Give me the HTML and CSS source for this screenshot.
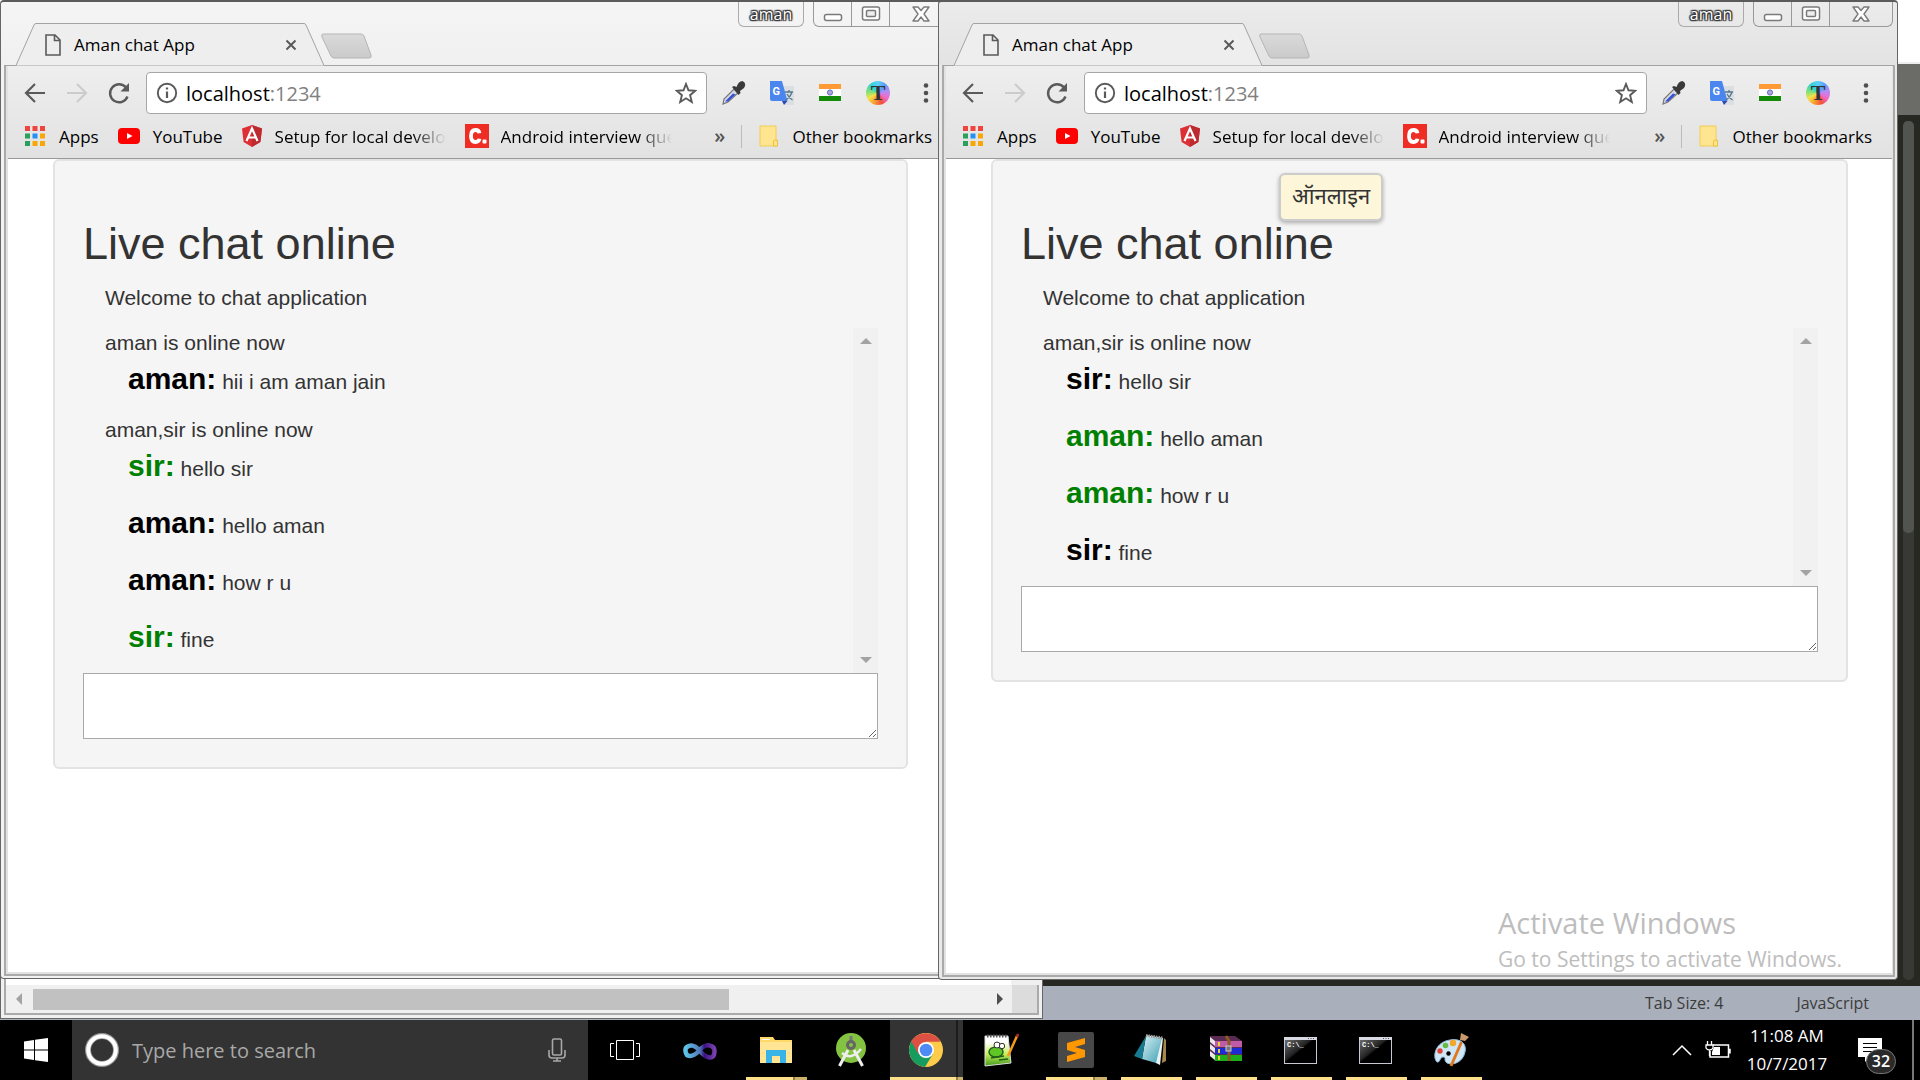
FILE: index.html
```html
<!DOCTYPE html>
<html lang="en">
<head>
<meta charset="utf-8">
<meta name="viewport" content="width=device-width, initial-scale=1">
<title>Aman chat App</title>
<link rel="stylesheet" href="styles.css">
</head>
<body>
<svg class="sprite" aria-hidden="true">
  <defs>
    <linearGradient id="g-newtab" x1="0" y1="0" x2="0" y2="1"><stop offset="0" stop-color="#dadada"/><stop offset="1" stop-color="#cacaca"/></linearGradient>
    <linearGradient id="g-vs" x1="0" x2="1"><stop offset="0" stop-color="#5fc3e8"/><stop offset=".5" stop-color="#4f78b8"/><stop offset=".65" stop-color="#3b1280"/><stop offset="1" stop-color="#7a3fb0"/></linearGradient>
    <linearGradient id="g-pad" x1="0" y1="0" x2="1" y2="1"><stop offset="0" stop-color="#d9f1f5"/><stop offset="1" stop-color="#3f9fb3"/></linearGradient>
    <linearGradient id="g-cmd" x1="0" y1="0" x2="1" y2="1"><stop offset="0" stop-color="#777"/><stop offset=".45" stop-color="#222"/><stop offset=".5" stop-color="#000"/></linearGradient>
    <linearGradient id="g-npp" x1="0" y1="0" x2="0" y2="1"><stop offset=".2" stop-color="#fff"/><stop offset=".6" stop-color="#c8ee5a"/><stop offset="1" stop-color="#3f9b1c"/></linearGradient>
  </defs>
  <symbol id="i-tab" viewBox="0 0 312 43"><path d="M0 42.500H3L21 2Q21.500.5 23 .5H291Q292.500.5 293 2L311 42.500" fill="#eee" stroke="#a3a3a3"/></symbol>
  <symbol id="i-newtab" viewBox="0 0 51 26"><path d="M2 1H40Q42 1 43 3L50 22Q51 25 48 25H13Q11 25 10 23L1 4Q0 1 2 1Z" fill="url(#g-newtab)" stroke="#b5b5b5"/></symbol>
  <symbol id="i-doc" viewBox="0 0 16 22"><path d="M1 1H10L15 6V21H1ZM9.500 1V6.500H15" fill="none" stroke="#5a5a5a" stroke-width="1.600"/></symbol>
  <symbol id="i-x" viewBox="0 0 12 12"><path d="M1.500 1.500L10.500 10.500M10.500 1.500L1.500 10.500" stroke="#5a5a5a" stroke-width="2"/></symbol>
  <symbol id="i-back" viewBox="0 0 24 24"><path d="M12 3L3 12L12 21M3 12H22" fill="none" stroke="currentColor" stroke-width="2.200"/></symbol>
  <symbol id="i-fwd" viewBox="0 0 24 24"><path d="M12 3L21 12L12 21M21 12H2" fill="none" stroke="currentColor" stroke-width="2.200"/></symbol>
  <symbol id="i-reload" viewBox="0 0 24 24"><path d="M20.500 15.500A9 9 0 1 1 19 6.500" fill="none" stroke="#5a5a5a" stroke-width="2.400"/><path d="M22 2V10.500H13.500Z" fill="#5a5a5a"/></symbol>
  <symbol id="i-info" viewBox="0 0 22 22"><circle cx="11" cy="11" r="9.200" fill="none" stroke="#5a5a5a" stroke-width="1.900"/><path d="M11 5.500V7.500M11 9.500V16" stroke="#5a5a5a" stroke-width="2.200"/></symbol>
  <symbol id="i-star" viewBox="0 0 22 22"><path d="M11 2L13.500 8.300L20.300 8.800L15.100 13.200L16.800 20L11 16.300L5.200 20L6.900 13.200L1.700 8.800L8.500 8.300Z" fill="none" stroke="#5a5a5a" stroke-width="1.900"/></symbol>
  <symbol id="i-drop" viewBox="0 0 24 24"><path d="M1 23L2 18L12 8L16 12L6 21Z" fill="#d5d8e4" stroke="#777" stroke-width="1.200"/><path d="M3 20.500L11 12.500L13.500 13.500L6 20.500Z" fill="#3450d8"/><path d="M10 6L12 5L14.500 6Q16.500 0 20.500 0Q25 2 22 7L18 10L18.500 12L16.500 14Z" fill="#3a3a3a"/></symbol>
  <symbol id="i-gt" viewBox="0 0 24 24"><path d="M10 5H24V24H15Z" fill="#dcdfe2"/><path d="M0 0H12L17.500 20H2Q0 20 0 18Z" fill="#4a86ee"/><path d="M12 20H17.500L14 24Z" fill="#2b48b0"/><text x="2.500" y="14" font-family="Roboto" font-weight="700" font-size="11" fill="#fff">G</text><path d="M15 11H23M19 9V11M22 11Q20 17 15.500 19M17 13Q19 17 22.500 19" fill="none" stroke="#56788c" stroke-width="1.300"/></symbol>
  <symbol id="i-flag" viewBox="0 0 24 24"><rect x="1" y="3" width="22" height="5" fill="#ff9a35"/><rect x="1" y="8" width="22" height="8" fill="#fff"/><rect x="1" y="15" width="22" height="5" fill="#138a08"/><circle cx="12" cy="11.500" r="2.600" fill="#a8a8dc" stroke="#6a6abf"/></symbol>
  <symbol id="i-dots" viewBox="0 0 6 24"><circle cx="3" cy="4.500" r="2.300" fill="#4f4f4f"/><circle cx="3" cy="12" r="2.300" fill="#4f4f4f"/><circle cx="3" cy="19.500" r="2.300" fill="#4f4f4f"/></symbol>
  <symbol id="i-apps" viewBox="0 0 20 20"><path d="M0 0H5V5H0ZM7.500 0H12.500V5H7.500ZM15 0H20V5H15Z" fill="#f0443e"/><path d="M0 7.500H5V12.500H0ZM0 15H5V20H0Z" fill="#2ba05a"/><path d="M7.500 7.500H12.500V12.500H7.500Z" fill="#2490f4"/><path d="M15 7.500H20V12.500H15ZM7.500 15H12.500V20H7.500ZM15 15H20V20H15Z" fill="#f7a808"/></symbol>
  <symbol id="i-yt" viewBox="0 0 22 16"><rect width="22" height="16" rx="4" fill="#f00"/><path d="M9 5L14.500 8L9 11Z" fill="#fff"/></symbol>
  <symbol id="i-ng" viewBox="0 0 20 22"><path d="M10 0L20 3.500L18.400 17L10 22L1.600 17L0 3.500Z" fill="#dd3035"/><path d="M10 0L20 3.500L18.400 17L10 22Z" fill="#bd2a30"/><path d="M4.500 16L10 3.500L15.500 16M6.500 12.500H13.500" fill="none" stroke="#fff" stroke-width="2.200"/></symbol>
  <symbol id="i-c" viewBox="0 0 24 24"><rect width="24" height="24" fill="#ee2e24"/><path d="M14.500 9.200Q14 6 10.500 6Q6 6 6 12Q6 18 10.500 18Q14 18 14.500 14.800" fill="none" stroke="#fff" stroke-width="3.800"/><rect x="17.500" y="15.500" width="4" height="4" rx="1" fill="#fff"/></symbol>
  <symbol id="i-folder" viewBox="0 0 20 22"><path d="M1 1H17V15H18.500V21H1Z" fill="#ffe58f" stroke="#f4cc55"/><path d="M14.500 21V17Q14.500 15 16 15Q18.500 15 18.500 17V21Z" fill="#ffe58f" stroke="#edc13a"/></symbol>
  <symbol id="i-min" viewBox="0 0 20 18"><rect x="1.500" y="9.500" width="17" height="6" rx="2" fill="#fff" stroke="#7a7a7a" stroke-width="1.500"/></symbol>
  <symbol id="i-max" viewBox="0 0 20 18"><rect x="1.500" y="2" width="17" height="13" rx="2" fill="#fff" stroke="#7a7a7a" stroke-width="1.500"/><rect x="5.500" y="5.500" width="9" height="6" rx="1" fill="#eee" stroke="#7a7a7a" stroke-width="1.500"/></symbol>
  <symbol id="i-close" viewBox="0 0 20 18"><path d="M2 2H7L10 5.500L13 2H18L13 9L18 16H13L10 12L7 16H2L7 9Z" fill="#fff" stroke="#7a7a7a" stroke-width="1.400" stroke-linejoin="round"/></symbol>
</svg>

<div class="desktop">
  <main class="workspace">
    <div class="editor" aria-hidden="true">
      <div class="editor-title"></div>
      <div class="editor-tabs"></div>
      <div class="editor-code"><div class="editor-track"><div class="editor-thumb"></div></div></div>
      <div class="editor-status"><span>Tab Size: 4</span><span>JavaScript</span></div>
    </div>

    <div class="back-window" aria-hidden="true">
      <div class="back-page"></div>
      <div class="hscroll">
        <i class="arrow-left"></i><div class="htrack"><div class="hthumb"></div></div><i class="arrow-right"></i><div class="hcorner"></div>
      </div>
    </div>

    <section class="window window-left" aria-label="Aman chat App, aman">
      <header class="titlebar">
        <div class="tab"><svg class="tab-shape"><use href="#i-tab"/></svg><svg class="doc"><use href="#i-doc"/></svg><span class="tab-name">Aman chat App</span><button class="tab-close" aria-label="Close tab"><svg><use href="#i-x"/></svg></button></div>
        <button class="newtab" aria-label="New tab"><svg><use href="#i-newtab"/></svg></button>
        <div class="controls">
          <button class="profile">aman</button>
          <div class="control-group"><button aria-label="Minimize"><svg><use href="#i-min"/></svg></button><button aria-label="Maximize"><svg><use href="#i-max"/></svg></button><button class="close" aria-label="Close"><svg><use href="#i-close"/></svg></button></div>
        </div>
      </header>
      <div class="client">
        <div class="chrome">
          <div class="toolbar">
            <button class="tool" aria-label="Back"><svg><use href="#i-back"/></svg></button>
            <button class="tool off" aria-label="Forward"><svg><use href="#i-fwd"/></svg></button>
            <button class="tool" aria-label="Reload"><svg><use href="#i-reload"/></svg></button>
            <div class="omnibox"><svg><use href="#i-info"/></svg><span class="url">localhost<span class="port">:1234</span></span><svg><use href="#i-star"/></svg></div>
            <div class="extensions">
              <button class="tool" aria-label="Colour picker"><svg><use href="#i-drop"/></svg></button>
              <button class="tool" aria-label="Translate"><svg><use href="#i-gt"/></svg></button>
              <button class="tool" aria-label="Hindi"><svg><use href="#i-flag"/></svg></button>
              <button class="tool wheel" aria-label="Themes">T</button>
              <button class="tool" aria-label="Menu"><svg><use href="#i-dots"/></svg></button>
            </div>
          </div>
          <nav class="bookmarks">
            <a href="#" class="bm-apps"><svg class="s20"><use href="#i-apps"/></svg>Apps</a>
            <a href="#" class="bm-yt"><svg class="yt"><use href="#i-yt"/></svg>YouTube</a>
            <a href="#" class="bm-ng"><svg class="s22"><use href="#i-ng"/></svg><span class="fade">Setup for local develo</span></a>
            <a href="#" class="bm-c"><svg class="s24"><use href="#i-c"/></svg><span class="fade">Android interview que</span></a>
            <button class="more" aria-label="More bookmarks">»</button>
            <a href="#" class="other"><svg class="s22"><use href="#i-folder"/></svg>Other bookmarks</a>
          </nav>
        </div>
        <div class="page">
          <div class="well">
            <h1>Live chat online</h1>
            <p class="welcome">Welcome to chat application</p>
            <div class="log">
              <div class="messages">
                <p class="status">aman is online now</p>
                <p class="msg"><b>aman:</b> hii i am aman jain</p>
                <p class="status">aman,sir is online now</p>
                <p class="msg them"><b>sir:</b> hello sir</p>
                <p class="msg"><b>aman:</b> hello aman</p>
                <p class="msg"><b>aman:</b> how r u</p>
                <p class="msg them"><b>sir:</b> fine</p>
              </div>
              <div class="vscroll" aria-hidden="true"><i class="arrow-up"></i><i class="arrow-down"></i></div>
            </div>
            <textarea aria-label="Message"></textarea>
          </div>
        </div>
      </div>
    </section>

    <section class="window window-right" aria-label="Aman chat App, sir">
      <header class="titlebar">
        <div class="tab"><svg class="tab-shape"><use href="#i-tab"/></svg><svg class="doc"><use href="#i-doc"/></svg><span class="tab-name">Aman chat App</span><button class="tab-close" aria-label="Close tab"><svg><use href="#i-x"/></svg></button></div>
        <button class="newtab" aria-label="New tab"><svg><use href="#i-newtab"/></svg></button>
        <div class="controls">
          <button class="profile">aman</button>
          <div class="control-group"><button aria-label="Minimize"><svg><use href="#i-min"/></svg></button><button aria-label="Maximize"><svg><use href="#i-max"/></svg></button><button class="close" aria-label="Close"><svg><use href="#i-close"/></svg></button></div>
        </div>
      </header>
      <div class="client">
        <div class="chrome">
          <div class="toolbar">
            <button class="tool" aria-label="Back"><svg><use href="#i-back"/></svg></button>
            <button class="tool off" aria-label="Forward"><svg><use href="#i-fwd"/></svg></button>
            <button class="tool" aria-label="Reload"><svg><use href="#i-reload"/></svg></button>
            <div class="omnibox"><svg><use href="#i-info"/></svg><span class="url">localhost<span class="port">:1234</span></span><svg><use href="#i-star"/></svg></div>
            <div class="extensions">
              <button class="tool" aria-label="Colour picker"><svg><use href="#i-drop"/></svg></button>
              <button class="tool" aria-label="Translate"><svg><use href="#i-gt"/></svg></button>
              <button class="tool" aria-label="Hindi"><svg><use href="#i-flag"/></svg></button>
              <button class="tool wheel" aria-label="Themes">T</button>
              <button class="tool" aria-label="Menu"><svg><use href="#i-dots"/></svg></button>
            </div>
          </div>
          <nav class="bookmarks">
            <a href="#" class="bm-apps"><svg class="s20"><use href="#i-apps"/></svg>Apps</a>
            <a href="#" class="bm-yt"><svg class="yt"><use href="#i-yt"/></svg>YouTube</a>
            <a href="#" class="bm-ng"><svg class="s22"><use href="#i-ng"/></svg><span class="fade">Setup for local develo</span></a>
            <a href="#" class="bm-c"><svg class="s24"><use href="#i-c"/></svg><span class="fade">Android interview que</span></a>
            <button class="more" aria-label="More bookmarks">»</button>
            <a href="#" class="other"><svg class="s22"><use href="#i-folder"/></svg>Other bookmarks</a>
          </nav>
        </div>
        <div class="page">
          <div class="well">
            <h1>Live chat online</h1>
            <p class="welcome">Welcome to chat application</p>
            <div class="log">
              <div class="messages">
                <p class="status">aman,sir is online now</p>
                <p class="msg"><b>sir:</b> hello sir</p>
                <p class="msg them"><b>aman:</b> hello aman</p>
                <p class="msg them"><b>aman:</b> how r u</p>
                <p class="msg"><b>sir:</b> fine</p>
              </div>
              <div class="vscroll" aria-hidden="true"><i class="arrow-up"></i><i class="arrow-down"></i></div>
            </div>
            <textarea aria-label="Message"></textarea>
          </div>
          <div class="tooltip" role="tooltip" lang="hi">ऑनलाइन</div>
        </div>
      </div>
    </section>

    <div class="watermark"><div class="wm-title">Activate Windows</div><div class="wm-text">Go to Settings to activate Windows.</div></div>
  </main>

  <footer class="taskbar">
    <button class="start" aria-label="Start"><svg viewBox="0 0 24 24"><path d="M0 3.500L10 2V11.500H0ZM11 1.800L24 0V11.500H11ZM0 12.500H10V22L0 20.500ZM11 12.500H24V24L11 22.200Z" fill="#fff"/></svg></button>
    <div class="search">
      <svg class="ring" viewBox="0 0 34 34"><circle cx="17" cy="17" r="14" fill="none" stroke="#999" stroke-width="6"/><circle cx="17" cy="17" r="13.800" fill="none" stroke="#fff" stroke-width="4"/></svg>
      <input type="text" placeholder="Type here to search" aria-label="Search">
      <svg class="mic" viewBox="0 0 18 24"><rect x="4.500" y="1" width="9" height="16" rx="1.500" fill="none" stroke="#a8a8a8" stroke-width="1.600"/><path d="M1 12V17Q1 20 4 20H14Q17 20 17 17V12M9 20V23M5 23H13" fill="none" stroke="#a8a8a8" stroke-width="1.600"/></svg>
    </div>
    <div class="apps">
      <button class="app" aria-label="Task view"><svg viewBox="0 0 36 36"><path d="M8.500 8.500H25.500V27.500H8.500ZM6 11.500H2.500V24.500H6M28 11.500H31.500V24.500H28" fill="none" stroke="#fff"/></svg></button>
      <button class="app" aria-label="Visual Studio"><svg viewBox="0 0 36 36"><path d="M17 19Q11 12 6 14Q2 15 2.500 19Q3 24 7 24Q11 24 16 19Q21 12.500 26.500 13.500Q31.500 14.500 31.500 19Q31.500 26 26.500 25.500Q22 25 17 19Z" fill="none" stroke="url(#g-vs)" stroke-width="4.500"/></svg></button>
      <button class="app open stack" aria-label="File Explorer"><svg viewBox="0 0 36 36"><path d="M2 5H15L17 8H34V31H2Z" fill="#ffd868"/><path d="M2 10H34V31H2Z" fill="#ffe594"/><path d="M4 7.500H12" stroke="#fff"/><path d="M8 31V18H28V31H22V24H14V31Z" fill="#39b4e9"/></svg></button>
      <button class="app" aria-label="Android Studio"><svg viewBox="0 0 36 36"><circle cx="18" cy="16" r="15" fill="#84c341"/><path d="M18 10L18 4" stroke="#777" stroke-width="3"/><path d="M15 18L6.500 34M21 18L29.500 34" stroke="#eee" stroke-width="3"/><path d="M9 21Q18 29 28 17" fill="none" stroke="#eee" stroke-width="2.500"/><circle cx="18" cy="13" r="3.500" fill="#84c341" stroke="#666" stroke-width="3"/></svg></button>
      <button class="app open stack active" aria-label="Google Chrome"><svg viewBox="0 0 36 36"><circle cx="18" cy="18" r="17" fill="#ffcb4a"/><path d="M18 18L3.300 9.500A17 17 0 0 0 17 35L25 22Z" fill="#179c5f"/><path d="M3.300 9.500A17 17 0 0 1 32.700 9.800H18L10.500 22Z" fill="#dd5144"/><circle cx="18" cy="18" r="8" fill="#fff"/><circle cx="18" cy="18" r="6.300" fill="#4c8bf5"/></svg></button>
      <button class="app" aria-label="Notepad++"><svg viewBox="0 0 36 36"><path d="M2 4H25L28 31L2 34Z" fill="url(#g-npp)" stroke="#ddd"/><path d="M4 4H25" stroke="#555" stroke-width="3" stroke-dasharray="1.500 1.500"/><ellipse cx="13" cy="20" rx="7" ry="5" fill="#5fc626" stroke="#23611a" stroke-width="1.500"/><circle cx="14" cy="13" r="3" fill="#fff" stroke="#333"/><circle cx="19" cy="14" r="2.700" fill="#fff" stroke="#333"/><path d="M8 26L21 24M16 28L25 27" stroke="#215e18" stroke-width="1.500"/><path d="M25 24L34 4" stroke="#f39a1c" stroke-width="2.500"/><path d="M34 5L35 2" stroke="#b3292c" stroke-width="2.500"/></svg></button>
      <button class="app open stack" aria-label="Sublime Text"><svg viewBox="0 0 36 36"><rect width="36" height="36" rx="2" fill="#484848"/><path d="M9 11L27 6V12L17 15L27 18V25L9 30V24L19 21L9 18Z" fill="#ff9800"/></svg></button>
      <button class="app open" aria-label="Notepad"><svg viewBox="0 0 36 36"><path d="M31 6L33 8V29L29 31Z" fill="#a88848"/><path d="M13 3L30 6L27 33L23 31Z" fill="#e9f3f4"/><path d="M13 4L29 6L23 31L9 27Z" fill="url(#g-pad)"/><path d="M13 4L9 27L1 24Z" fill="#187b91"/><path d="M13 3.500L30 6" stroke="#999" stroke-width="3" stroke-dasharray="1.500 1"/></svg></button>
      <button class="app open" aria-label="WinRAR"><svg viewBox="0 0 36 36"><path d="M2 4H27L34 9V29H7L2 24Z" fill="#5b2c53"/><path d="M7 9H34V15H7Z" fill="#c05ba8"/><path d="M7 16H34V22H7Z" fill="#1c2bd6"/><path d="M7 23H34V29H7Z" fill="#1fae1b"/><path d="M2 5L7 9V14L2 10ZM2 12L7 16V21L2 17ZM2 19L7 23V28L2 24Z" fill="#e8e8e8"/><path d="M10 12H12M10 19H12M10 26H12" stroke="#e6d52a" stroke-width="4"/><path d="M18 4L21 9V29" fill="none" stroke="#8b5a23" stroke-width="3"/><rect x="18" y="14" width="5" height="5" fill="#777" stroke="#ccc"/></svg></button>
      <button class="app open" aria-label="Command Prompt"><svg viewBox="0 0 36 36"><rect x="1.500" y="5.500" width="32" height="26" fill="url(#g-cmd)" stroke="#c6c9d3"/><rect x="1" y="5" width="33" height="3" fill="#d7dae3"/><path d="M25 6.500H32" stroke="#556" stroke-dasharray="1 1.500"/><text x="4" y="15" font-family="Liberation Mono" font-size="7" font-weight="700" fill="#fff">C:\_</text></svg></button>
      <button class="app open" aria-label="Command Prompt"><svg viewBox="0 0 36 36"><rect x="1.500" y="5.500" width="32" height="26" fill="url(#g-cmd)" stroke="#c6c9d3"/><rect x="1" y="5" width="33" height="3" fill="#d7dae3"/><path d="M25 6.500H32" stroke="#556" stroke-dasharray="1 1.500"/><text x="4" y="15" font-family="Liberation Mono" font-size="7" font-weight="700" fill="#fff">C:\_</text></svg></button>
      <button class="app open" aria-label="Paint"><svg viewBox="0 0 36 36"><path d="M17 8C28 6 34 12 32 20C30 30 20 34 14 31C10 28 14 25 10 25C7 25 7 31 4 30C-1 25 2 10 17 8Z" fill="#cfe6f6" stroke="#8fb9d8"/><circle cx="15.500" cy="21.500" r="2.200" fill="#000"/><circle cx="7" cy="19" r="2.700" fill="#dd4433"/><circle cx="12.500" cy="13.500" r="2.800" fill="#65bb45"/><circle cx="20" cy="11" r="3.200" fill="#f4a62a"/><path d="M18 34L28.500 10" stroke="#e07820" stroke-width="3"/><path d="M27 8L28 1L36 5L32 9Z" fill="#c9996b"/></svg></button>
    </div>
    <div class="tray">
      <svg class="chevron" viewBox="0 0 20 12"><path d="M1 11L10 2L19 11" fill="none" stroke="#fff" stroke-width="1.500"/></svg>
      <svg class="battery" viewBox="0 0 26 18"><path d="M8 4H23.500V16H5V10M23.500 8.500H25V12.500" fill="none" stroke="#fff" stroke-width="1.500"/><path d="M9 6H15V14H7V11Z" fill="#fff"/><path d="M2.500 0V4M6.500 0V4M1 4H8V7Q7 9 4.500 9Q2 9 1 7ZM4.500 9V15" fill="#000" stroke="#fff" stroke-width="1.300"/></svg>
      <div class="clock"><time>11:08 AM</time><time>10/7/2017</time></div>
      <button class="notify" aria-label="Notifications"><svg viewBox="0 0 24 24"><path d="M0 0H24V19H12L7 24V19H0Z" fill="#fff"/><path d="M5 5.500H19M5 9.500H19M5 13.500H19" stroke="#000"/></svg><span class="badge">32</span></button>
      <div class="peek"></div>
    </div>
  </footer>
</div>
</body>
</html>
```

FILE: styles.css
```css
* { box-sizing: border-box; }
body { margin: 0; font-family: "Open Sans", "Noto Sans", sans-serif; font-size: 17px; color: #000; }
button { border: 0; padding: 0; margin: 0; background: none; font: inherit; color: inherit; display: grid; place-items: center; }
a { color: inherit; text-decoration: none; }
svg { display: block; flex: none; }
p, h1 { margin: 0; }
.sprite { position: absolute; width: 0; height: 0; }

.desktop { height: 100vh; display: flex; flex-direction: column; overflow: hidden; }
.workspace { flex: 1; position: relative; min-height: 0; background: #272822; overflow: hidden; }

/* Code editor behind the browser windows */
.editor { height: 100%; display: flex; flex-direction: column; }
.editor-title { height: 64px; background: #fff; border-bottom: 2px solid #eee; }
.editor-tabs { height: 51px; background: #6b6c67; }
.editor-code { flex: 1; display: flex; justify-content: flex-end; padding: 6px 6px 6px 0; }
.editor-track { width: 11px; background: #383934; border-radius: 5px; }
.editor-thumb { height: 48%; background: #52544f; border-radius: 5px; }
.editor-status { height: 34px; background: #a9b0bb; color: #3c3c3c; font-size: 16px; display: flex; justify-content: flex-end; align-items: center; gap: 73px; padding-right: 51px; }

.back-window { position: absolute; left: 0; bottom: 1px; width: calc(54% + 6px); height: 60px; background: #f0f0f0; border: 1px solid #666; display: flex; flex-direction: column; padding: 0 3px 3px; }
.back-page { flex: 1; background: #fff; margin-right: 28px; border: 2px solid #aaa; border-width: 0 0 0 2px; }
.hscroll { height: 30px; display: flex; align-items: center; background: #f0f0f0; border: 2px solid #aaa; border-top: 0; padding-left: 10px; }
.htrack { flex: 1; height: 21px; margin: 0 10px 0 11px; }
.hthumb { height: 100%; width: 73%; background: #c1c1c1; }
.hcorner { align-self: stretch; width: 25px; background: #dcdcdc; margin-left: 9px; }
.arrow-left, .arrow-right { border: 6px solid transparent; border-left: 0; border-right: 6px solid #a3a3a3; }
.arrow-right { border-right: 0; border-left: 6px solid #505050; }

/* Browser windows */
.window { position: absolute; top: 0; display: flex; flex-direction: column; background: #e9e9e9; border: 1px solid #666; border-top: 2px solid #5c5a5a; border-radius: 4px; }
.window-left { left: 0; bottom: 41px; width: calc(50% - 2px); background: #f2f2f2; }
.window-right { left: calc(50% - 22px); bottom: 40px; width: 50%; }
.titlebar { height: 63px; display: flex; align-items: flex-end; padding: 0 4px 0 12px; background: linear-gradient(#f5f5f5, #f0f0f0); border-radius: 4px 4px 0 0; }
.window-right .titlebar { background: linear-gradient(#ebebeb, #e3e3e3); }
.tab { position: relative; width: 312px; height: 43px; display: flex; align-items: center; padding: 0 28px 0 32px; margin-bottom: -1px; z-index: 1; }
.tab-shape { position: absolute; left: 0; top: 0; width: 312px; height: 43px; }
.doc, .tab-name, .tab-close { position: relative; }
.doc { width: 16px; height: 22px; }
.tab-name { flex: 1; margin-left: 13px; }
.tab-close svg { width: 12px; height: 12px; }
.newtab { margin: 0 0 6px -4px; }
.newtab svg { width: 51px; height: 26px; }
.controls { align-self: flex-start; margin-left: auto; display: flex; gap: 9px; }
.profile { width: 66px; height: 25px; border: 1px solid #aaa; border-top: 0; border-radius: 0 0 6px 6px; font-size: 16px; line-height: 24px; color: #fff; text-shadow: 0 0 2px #333, 0 0 2px #333, 1px 1px 1px #333, -1px -1px 1px #333, 1px -1px 1px #333, -1px 1px 1px #333; }
.control-group { display: flex; height: 25px; border: 1px solid #999; border-top: 0; border-radius: 0 0 6px 6px; }
.control-group button { width: 38px; border-right: 1px solid #999; }
.control-group .close { width: 62px; border: 0; }
.control-group svg { width: 20px; height: 18px; }
.client { flex: 1; min-height: 0; margin: 0 2px 2px 3px; border: 2px solid #aaa; border-top: 1px solid #a3a3a3; display: flex; flex-direction: column; padding: 0 1px 2px 2px; background: #e2e2e2; }

.chrome { background: linear-gradient(#eee, #e2e2e2); border-bottom: 1px solid #999; height: 93px; flex: none; }
.toolbar { display: flex; align-items: center; height: 54px; padding: 0 14px 0 15px; gap: 18px; }
.tool { width: 24px; height: 24px; color: #5a5a5a; }
.tool.off { color: #ccc; }
.tool svg { width: 24px; height: 24px; }
.omnibox { flex: 1; height: 42px; margin-left: -3px; border: 1px solid #a6a6a6; border-radius: 4px; background: #fff; display: flex; align-items: center; gap: 8px; padding: 0 9px; font-size: 20px; }
.omnibox svg { width: 22px; height: 22px; }
.url { flex: 1; }
.port { color: #808080; }
.extensions { display: flex; gap: 24px; margin-left: -3px; }
.wheel { border-radius: 50%; background: conic-gradient(#5fd0f8, #5a9cf8, #b58cf0, #f06ad0, #f4503c, #f89a30, #f4e24a, #7de07a, #30d0d8, #5fd0f8); font-family: "Liberation Serif", serif; font-weight: 700; font-size: 22px; line-height: 24px; color: #333; }
.bookmarks { display: flex; align-items: center; height: 32px; padding: 0 20px 0 17px; white-space: nowrap; }
.bookmarks a { display: flex; align-items: center; gap: 13px; margin-right: 19px; }
.bookmarks .bm-apps { gap: 14px; }
.bookmarks .bm-c { gap: 12px; margin-right: 0; }
.s20 { width: 20px; height: 20px; }
.s22 { width: 20px; height: 22px; }
.s24 { width: 24px; height: 24px; }
.yt { width: 22px; height: 16px; }
.fade { width: 171px; overflow: hidden; -webkit-mask-image: linear-gradient(90deg, #000 80%, transparent); mask-image: linear-gradient(90deg, #000 80%, transparent); }
.more { margin-left: auto; margin-right: 16px; font-size: 20px; font-weight: 600; line-height: 24px; color: #555; }
.bookmarks .other { border-left: 1px solid #bbb; padding-left: 17px; margin: 0; }

/* Chat page */
.page { position: relative; flex: 1; min-height: 0; overflow: hidden; background: #fff; padding: 0 44px 0 45px; font: 21px/30px "Liberation Sans", Arial, sans-serif; color: #333; }
.well { background: #f5f5f5; border: 2px solid #e3e3e3; border-radius: 6px; padding: 28px; }
.well h1 { font-size: 45px; line-height: 50px; font-weight: 400; margin: 30px 0 14px; }
.welcome { padding-left: 22px; margin-bottom: 15px; }
.log { display: flex; }
.messages { flex: 1; }
.status { padding-left: 22px; }
.msg { padding-left: 45px; margin-bottom: 15px; }
.msg b { font-size: 30px; line-height: 42px; color: #000; }
.them b { color: #008000; }
.vscroll { width: 25px; background: #f1f1f1; display: flex; flex-direction: column; justify-content: space-between; align-items: center; padding: 10px 0; }
.arrow-up, .arrow-down { border: 6px solid transparent; border-top: 0; border-bottom: 6px solid #a3a3a3; }
.arrow-down { border-bottom: 0; border-top: 6px solid #a3a3a3; }
textarea { display: block; width: 100%; height: 66px; border: 1px solid #a9a9a9; border-radius: 0; background: #fff; resize: both; font: inherit; }
.tooltip { position: absolute; left: 35.2%; top: 14px; height: 48px; padding: 0 11px; border: 2px solid #ccc; border-radius: 6px; background: #fdf6d9; box-shadow: 0 2px 4px rgba(0,0,0,.3); font-size: 22px; line-height: 40px; font-family: "Noto Sans", "Noto Sans Devanagari", sans-serif; }

.watermark { position: absolute; right: 78px; bottom: 46px; width: 344px; color: #bdbdbd; white-space: nowrap; }
.wm-title { font-size: 29px; line-height: 42px; }
.wm-text { font-size: 21px; line-height: 30px; }

/* Taskbar */
.taskbar { height: 60px; flex: none; display: flex; background: #000; color: #fff; }
.start { width: 72px; }
.start svg { width: 24px; height: 24px; }
.search { width: 516px; background: #333; display: flex; align-items: center; padding: 0 22px 0 13px; }
.ring { width: 34px; height: 34px; }
.search input { flex: 1; border: 0; padding: 0; margin: 0 13px; background: none; color: #fff; font: 20px "Open Sans", sans-serif; outline: 0; }
.search input::placeholder { color: #a8a8a8; opacity: 1; }
.mic { width: 18px; height: 24px; }
.apps { display: flex; }
.app { width: 75px; height: 60px; border-bottom: 3px solid transparent; padding-top: 3px; }
.app svg { width: 36px; height: 36px; }
.open { background: linear-gradient(#ffe08a, #ffe08a) 8px 100% / 61px 3px no-repeat; background-origin: border-box; background-clip: border-box; }
.stack { background-image: linear-gradient(90deg, #ffe08a 47px, #8f7f52 47px 49px, #cdb26c 49px); }
.active { background: linear-gradient(90deg, #ffe08a 66px, #8f7f52 66px 68px, #cdb26c 68px) 2px 100% / 73px 3px no-repeat border-box, linear-gradient(90deg, transparent 2px, #333 2px 68px, #1c1c1c 68px 70px, #333 70px) border-box; }
.tray { margin-left: auto; display: flex; align-items: center; }
.chevron { width: 20px; height: 12px; }
.battery { width: 26px; height: 18px; margin-left: 13px; }
.clock { display: flex; flex-direction: column; align-items: center; width: 84px; margin-left: 14px; line-height: 28px; }
.notify { position: relative; margin-left: 29px; width: 24px; height: 24px; }
.notify svg { width: 24px; height: 24px; }
.badge { position: absolute; left: 8px; top: 11px; width: 30px; height: 25px; border-radius: 13px; border: 1px solid #777; background: #2a2a2a; font-size: 16px; line-height: 22px; font-weight: 600; text-align: center; }
.peek { width: 8px; height: 60px; margin-left: 30px; border-left: 2px solid #777; }
```
